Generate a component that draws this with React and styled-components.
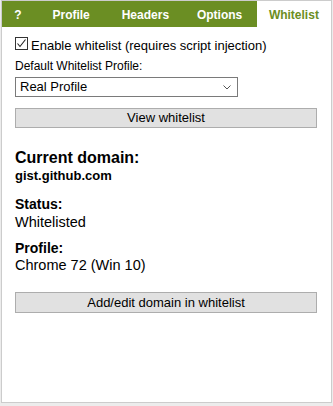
import React from "react";
import styled, { createGlobalStyle } from "styled-components";

const Global = createGlobalStyle`
  html, body { margin: 0; padding: 0; }
  body {
    background: #ececec;
    font-family: "Liberation Sans", Arial, sans-serif;
    color: #000;
  }
`;

const Popup = styled.div`
  box-sizing: border-box;
  margin-left: 1px;
  width: 331px;
  height: 403px;
  background: #fff;
  border: 1px solid #cccccc;
  display: flex;
  flex-direction: column;
`;

const TabBar = styled.div`
  display: flex;
  height: 26px;
  background: #6b8e23;
`;

const Tab = styled.div`
  box-sizing: border-box;
  flex: ${(p) => (p.$narrow ? "0 0 32px" : "1 1 0")};
  height: 26px;
  padding-top: 3px;
  line-height: 23px;
  text-align: center;
  font-size: 12px;
  font-weight: bold;
  color: ${(p) => (p.$active ? "#6b8e23" : "#ffffff")};
  background: ${(p) => (p.$active ? "#ffffff" : "transparent")};
`;

const Content = styled.div`
  display: flex;
  flex-direction: column;
  padding: 10px 14px 0 13px;
`;

const CheckRow = styled.label`
  display: flex;
  align-items: flex-start;
  gap: 3px;
  font-size: 13px;
`;

const Box = styled.span`
  box-sizing: border-box;
  flex: 0 0 13px;
  width: 13px;
  height: 13px;
  border: 1px solid #333;
  background: #fff;
  display: flex;
  align-items: center;
  justify-content: center;
`;

const CheckText = styled.span`
  margin-top: 1px;
  line-height: 15px;
`;

const FieldLabel = styled.div`
  margin-top: 6px;
  font-size: 12px;
  line-height: 14px;
`;

const Select = styled.div`
  box-sizing: border-box;
  margin-top: 4px;
  width: 223px;
  height: 20px;
  border: 1px solid #7a7a7a;
  padding-left: 4px;
  padding-right: 6px;
  display: flex;
  align-items: center;
  justify-content: space-between;
  font-size: 13px;
  line-height: 18px;
`;

const Button = styled.div`
  box-sizing: border-box;
  margin-top: ${(p) => p.$mt}px;
  height: ${(p) => p.$h}px;
  border: 1px solid #adadad;
  background: #e1e1e1;
  text-align: center;
  font-size: 13px;
  line-height: ${(p) => p.$h - 2}px;
`;

const Heading = styled.div`
  margin-top: ${(p) => p.$mt}px;
  font-weight: bold;
  font-size: ${(p) => p.$size}px;
  line-height: ${(p) => p.$size + 2}px;
`;

const Value = styled.div`
  margin-top: ${(p) => p.$mt}px;
  font-weight: ${(p) => (p.$bold ? "bold" : "normal")};
  font-size: ${(p) => p.$size}px;
  line-height: 16px;
`;

export default function App() {
  return (
    <>
      <Global />
      <Popup>
        <TabBar>
          <Tab $narrow>?</Tab>
          <Tab>Profile</Tab>
          <Tab>Headers</Tab>
          <Tab>Options</Tab>
          <Tab $active>Whitelist</Tab>
        </TabBar>
        <Content>
          <CheckRow>
            <Box>
              <svg width="11" height="11" viewBox="0 0 11 11">
                <path d="M1.5 5.5 L4 8.5 L9.5 1.5" fill="none" stroke="#222" strokeWidth="1.1" />
              </svg>
            </Box>
            <CheckText>Enable whitelist (requires script injection)</CheckText>
          </CheckRow>
          <FieldLabel>Default Whitelist Profile:</FieldLabel>
          <Select>
            <span>Real Profile</span>
            <svg width="8" height="5" viewBox="0 0 8 5">
              <path d="M0.5 0.5 L4 4 L7.5 0.5" fill="none" stroke="#555" strokeWidth="1" />
            </svg>
          </Select>
          <Button $mt={11} $h={20}>View whitelist</Button>
          <Heading $mt={21} $size={16}>Current domain:</Heading>
          <Value $mt={1} $size={13} $bold>gist.github.com</Value>
          <Heading $mt={12} $size={14}>Status:</Heading>
          <Value $mt={2} $size={14.5}>Whitelisted</Value>
          <Heading $mt={10} $size={14}>Profile:</Heading>
          <Value $mt={1} $size={14.5}>Chrome 72 (Win 10)</Value>
          <Button $mt={19} $h={21}>Add/edit domain in whitelist</Button>
        </Content>
      </Popup>
    </>
  );
}
